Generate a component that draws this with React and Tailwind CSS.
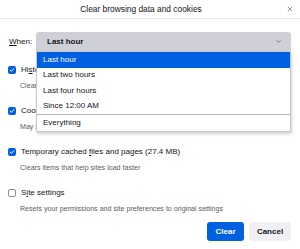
import { X, ChevronDown } from "lucide-react";

const FONT = { fontFamily: '"Liberation Sans", Arial, sans-serif' };

const options = ["Last hour", "Last two hours", "Last four hours", "Since 12:00 AM"];

function Box({ checked }) {
  if (!checked) {
    return <div className="w-[8px] h-[8px] rounded-[2px] border border-[#8f8f9d] bg-white shrink-0" />;
  }
  return (
    <div className="w-[8px] h-[8px] rounded-[2px] bg-[#0061e0] shrink-0 flex items-center justify-center">
      <svg width="6" height="6" viewBox="0 0 12 12" fill="none">
        <path d="M2.2 6.3l2.5 2.4 5-5.4" stroke="#fff" strokeWidth="1.9" strokeLinecap="round" strokeLinejoin="round" />
      </svg>
    </div>
  );
}

function Option({ checked, label, desc }) {
  return (
    <div>
      <div className="h-[12px] flex items-center gap-[5px]">
        <Box checked={checked} />
        <span className="text-[8px] text-[#15141a] leading-[12px] whitespace-nowrap">{label}</span>
      </div>
      <p className="mt-[5px] pl-[12px] h-[10px] leading-[10px] text-[7.1px] text-[#5b5b66] whitespace-nowrap">{desc}</p>
    </div>
  );
}

export default function App() {
  return (
    <div className="w-[300px] h-[249px] bg-white overflow-hidden" style={FONT}>
      <div className="h-[19px] flex items-center border-b border-[#e5e5ea]">
        <div className="flex-1 text-center text-[8.4px] text-[#15141a] font-medium">Clear browsing data and cookies</div>
        <div className="w-[18px] flex items-center justify-center pr-[2px]">
          <X size={8} strokeWidth={1.6} className="text-[#3a3944]" />
        </div>
      </div>

      <div className="pl-2 pr-[9px]">
        <div className="mt-[13px] h-[19px] flex items-center">
          <span className="w-[28px] text-[8px] text-[#15141a] pl-[1px]">
            <span className="underline">W</span>hen:
          </span>
          <div className="relative flex-1 h-[19px]">
            <div className="h-full rounded-t-[3px] bg-[#cfcfd8] flex items-center justify-between pl-[11px] pr-[9px]">
              <span className="text-[8px] font-bold text-[#15141a]">Last hour</span>
              <ChevronDown size={7} strokeWidth={2} className="text-[#3a3944]" />
            </div>
            <div className="absolute left-0 right-0 top-full z-10 bg-white border border-[#c8c8cc] shadow-[1px_2px_3px_rgba(0,0,0,0.18)]">
              {options.map((o, i) => (
                <div
                  key={o}
                  className={`h-[15.5px] flex items-center pl-[6px] text-[8px] ${i === 0 ? "bg-[#0061e0] text-white" : "text-[#15141a]"}`}
                >
                  {o}
                </div>
              ))}
              <div className="h-px bg-[#b4b4b8]" />
              <div className="h-[15.5px] flex items-center pl-[6px] text-[8px] text-[#15141a]">Everything</div>
            </div>
          </div>
        </div>

        <div className="mt-[13px] flex flex-col gap-[14px]">
          <Option checked label={<>Hi<span className="underline">s</span>tory</>} desc="Clears sites and downloads history" />
          <Option checked label={<>Cookies and site data (3.2 MB)</>} desc="May sign you out of websites or empty carts" />
          <Option checked label={<>Temporary cached <span className="underline">f</span>iles and pages (27.4 MB)</>} desc="Clears items that help sites load faster" />
          <Option label={<>S<span className="underline">i</span>te settings</>} desc="Resets your permissions and site preferences to original settings" />
        </div>

        <div className="mt-[8px] flex justify-end gap-[5px]">
          <button className="w-[37px] h-[19px] rounded-[3px] bg-[#0061e0] text-white text-[8px] font-bold">Clear</button>
          <button className="w-[42px] h-[19px] rounded-[3px] bg-[#f0f0f4] text-[#15141a] text-[8px] font-bold">Cancel</button>
        </div>
      </div>
    </div>
  );
}
